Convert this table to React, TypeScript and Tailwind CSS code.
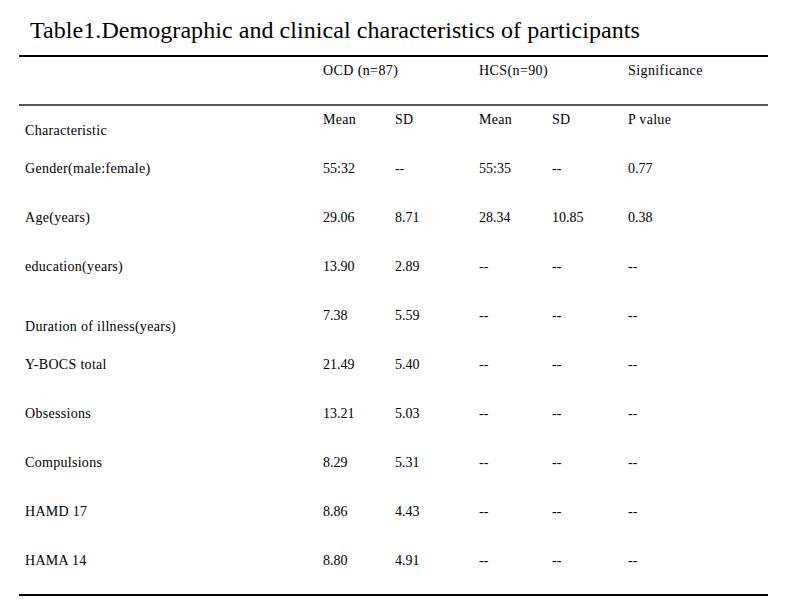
const rows: { label: string; values: string[]; drop?: boolean }[] = [
  { label: "Gender(male:female)", values: ["55:32", "--", "55:35", "--", "0.77"] },
  { label: "Age(years)", values: ["29.06", "8.71", "28.34", "10.85", "0.38"] },
  { label: "education(years)", values: ["13.90", "2.89", "--", "--", "--"] },
  { label: "Duration of illness(years)", values: ["7.38", "5.59", "--", "--", "--"], drop: true },
  { label: "Y-BOCS total", values: ["21.49", "5.40", "--", "--", "--"] },
  { label: "Obsessions", values: ["13.21", "5.03", "--", "--", "--"] },
  { label: "Compulsions", values: ["8.29", "5.31", "--", "--", "--"] },
  { label: "HAMD 17", values: ["8.86", "4.43", "--", "--", "--"] },
  { label: "HAMA 14", values: ["8.80", "4.91", "--", "--", "--"] },
];

const gridCols = "grid grid-cols-[298px_72px_84px_73px_76px_1fr] pl-[6px]";

export default function App() {
  return (
    <div
      className="h-[610px] w-[796px] overflow-hidden bg-white text-black"
      style={{ fontFamily: '"Liberation Serif", "Times New Roman", serif' }}
    >
      <h1 className="pl-[30px] pt-[16px] text-[24px] font-normal leading-[28px] tracking-[0.06px]">
        Table1.Demographic and clinical characteristics of participants
      </h1>

      <div className="ml-[19px] mt-[11px] w-[749px] border-y-2 border-black text-[14px] leading-[16px]">
        <div className={`${gridCols} h-[47px] pt-[6px] tracking-[0.4px]`}>
          <div />
          <div className="col-span-2">OCD (n=87)</div>
          <div className="col-span-2">HCS(n=90)</div>
          <div>Significance</div>
        </div>

        <div className="h-[2px] bg-[#555]" />

        <div className={`${gridCols} h-[55px] tracking-[0.3px]`}>
          <div className="pt-[17px]">Characteristic</div>
          <div className="pt-[6px]">Mean</div>
          <div className="pt-[6px]">SD</div>
          <div className="pt-[6px]">Mean</div>
          <div className="pt-[6px]">SD</div>
          <div className="pt-[6px]">P value</div>
        </div>

        {rows.map((row, i) => (
          <div
            key={row.label}
            className={`${gridCols} ${i === rows.length - 1 ? "h-[41px]" : "h-[49px]"}`}
          >
            <div className={`tracking-[0.3px] ${row.drop ? "pt-[11px]" : ""}`}>{row.label}</div>
            {row.values.map((v, j) => (
              <div key={j}>{v}</div>
            ))}
          </div>
        ))}
      </div>
    </div>
  );
}
